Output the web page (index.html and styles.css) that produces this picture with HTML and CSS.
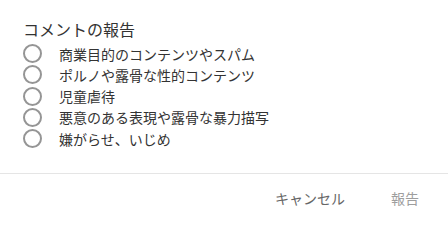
FILE: index.html
```html
<!DOCTYPE html>
<html lang="ja">
<head>
    <meta charset="UTF-8">
    <meta name="viewport" content="width=device-width, initial-scale=1.0">
    <title>コメントの報告</title>
    <link rel="stylesheet" href="styles.css">
</head>
<body>
    <div class="dialog">
        <div class="dialog-body">
            <h2 class="dialog-title">コメントの報告</h2>
            <ul class="reason-list">
                <li class="reason"><span class="radio"></span>商業目的のコンテンツやスパム</li>
                <li class="reason"><span class="radio"></span>ポルノや露骨な性的コンテンツ</li>
                <li class="reason"><span class="radio"></span>児童虐待</li>
                <li class="reason"><span class="radio"></span>悪意のある表現や露骨な暴力描写</li>
                <li class="reason"><span class="radio"></span>嫌がらせ、いじめ</li>
            </ul>
        </div>
        <div class="dialog-footer">
            <button class="btn">キャンセル</button>
            <button class="btn btn-disabled">報告</button>
        </div>
    </div>
</body>
</html>
```

FILE: styles.css
```css
body {
    margin: 0;
    padding: 0;
    background-color: #fff;
    font-family: "Noto Sans CJK JP", "Noto Sans", sans-serif;
    color: #333;
}

.dialog {
    width: 448px;
}

.dialog-body {
    padding: 17px 24px 24px 23px;
}

.dialog-title {
    margin: 0 0 2px 0;
    font-size: 16px;
    font-weight: normal;
    line-height: 24px;
}

.reason-list {
    list-style: none;
    margin: 0;
    padding: 0;
}

.reason {
    display: flex;
    align-items: center;
    height: 21.25px;
    font-size: 14px;
    line-height: 20px;
}

.radio {
    box-sizing: border-box;
    width: 19px;
    height: 19px;
    border: 2px solid #959595;
    border-radius: 50%;
    margin-right: 17px;
    flex-shrink: 0;
}

.dialog-footer {
    border-top: 1px solid #e5e5e5;
    display: flex;
    justify-content: flex-end;
    gap: 22px;
    padding: 6px 17px 8px 0;
}

.btn {
    background: none;
    border: none;
    font-family: inherit;
    font-size: 14px;
    line-height: 20px;
    color: #666;
    padding: 8px 12px;
    cursor: pointer;
}

.btn-disabled {
    color: #9e9e9e;
    cursor: default;
}
```
